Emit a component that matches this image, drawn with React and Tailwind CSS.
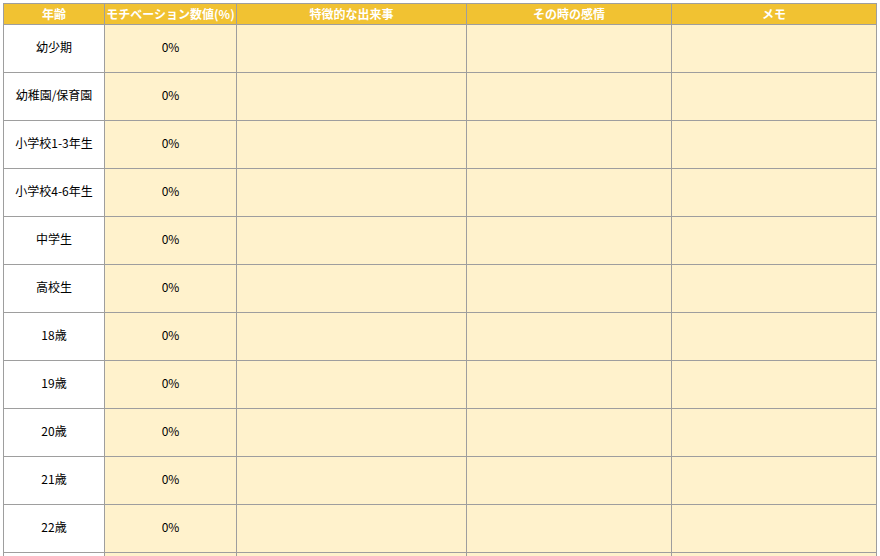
import React from "react";

const rows = [
  "幼少期",
  "幼稚園/保育園",
  "小学校1-3年生",
  "小学校4-6年生",
  "中学生",
  "高校生",
  "18歳",
  "19歳",
  "20歳",
  "21歳",
  "22歳",
  "23歳",
];

const headers = ["年齢", "モチベーション数値(%)", "特徴的な出来事", "その時の感情", "メモ"];

export default function App() {
  return (
    <div
      className="bg-white min-h-screen pt-[3px] pl-[3px]"
      style={{ fontFamily: '"Noto Sans CJK JP", "Noto Sans", sans-serif' }}
    >
      <div className="grid w-[874px] grid-cols-[100px_131px_229px_204px_204px] grid-rows-[20px] auto-rows-[47px] gap-px bg-[#9e9e9e] p-px">
        {headers.map((h) => (
          <div
            key={h}
            className="flex items-center justify-center bg-[#f1c232] text-white font-bold text-[12px] leading-none whitespace-nowrap"
          >
            {h}
          </div>
        ))}
        {rows.map((r) => (
          <React.Fragment key={r}>
            <div className="bg-white flex items-center justify-center pb-[4px] text-[12px] text-black">{r}</div>
            <div className="bg-[#fff2cc] flex items-center justify-center pb-[4px] text-[12px] text-black">0%</div>
            <div className="bg-[#fff2cc]" />
            <div className="bg-[#fff2cc]" />
            <div className="bg-[#fff2cc]" />
          </React.Fragment>
        ))}
      </div>
    </div>
  );
}
